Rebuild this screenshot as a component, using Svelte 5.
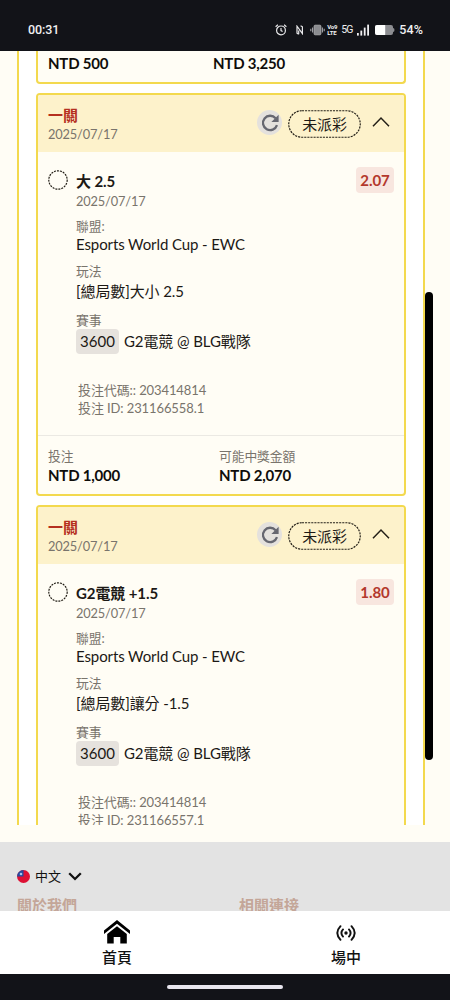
<script lang="ts">
  type Bet = {
    pick: string;
    odds: string;
    market: string;
    betId: string;
    stake: string;
    payout: string;
  };

  const bets: Bet[] = [
    {
      pick: '大 2.5',
      odds: '2.07',
      market: '[總局數]大小 2.5',
      betId: '231166558.1',
      stake: 'NTD 1,000',
      payout: 'NTD 2,070'
    },
    {
      pick: 'G2電競 +1.5',
      odds: '1.80',
      market: '[總局數]讓分 -1.5',
      betId: '231166557.1',
      stake: 'NTD 1,000',
      payout: 'NTD 1,800'
    }
  ];

  let open = $state([true, true]);
</script>

<div class="screen">
  <div class="status-bar">
    <span class="time">00:31</span>
    <div class="status-icons">
      <svg class="alarm" width="12" height="12" viewBox="0 0 12 12" fill="none" stroke="#e8e8ea" stroke-width="1.2">
        <circle cx="6" cy="6.4" r="4.4" />
        <path d="M6 3.9v2.7l1.6 1M.6 2.7L2.9.8M11.4 2.7L9.1.8" />
      </svg>
      <svg class="nfc" width="8" height="10" viewBox="0 0 8 10" fill="none" stroke="#e8e8ea" stroke-width="1.2">
        <path d="M2.7 9.2L1 8.2V1.2l5.4 7.4V1.8L4.6.8M2.7 9.2V5.4" />
      </svg>
      <svg class="vibrate" width="15" height="12" viewBox="0 0 15 12">
        <rect x="4.1" y="1.2" width="6.8" height="9.6" rx="1" fill="#8b8c90" stroke="#b5b5b8" stroke-width=".8" />
        <path d="M2.6 3.4v5.2M.8 4.7v2.6M12.4 3.4v5.2M14.2 4.7v2.6" stroke="#a5a5a9" stroke-width="1.1" />
      </svg>
      <span class="volte"><span>Vo9</span><span>LTE</span></span>
      <span class="net">5G</span>
      <svg class="signal" width="12" height="12" viewBox="0 0 12 12" fill="#f0f0f2">
        <rect x="0" y="9" width="1.8" height="2.6" />
        <rect x="3.4" y="6.6" width="1.8" height="5" />
        <rect x="6.8" y="3.6" width="1.8" height="8" />
        <rect x="10.2" y=".6" width="1.8" height="11" />
      </svg>
      <svg class="battery" width="20" height="10" viewBox="0 0 20 10">
        <path d="M2 0h14q2 0 2 2v1q1.5 0 1.5 2T18 7v1q0 2-2 2H2q-2 0-2-2V2q0-2 2-2z" fill="#8c8d91" />
        <path d="M2 0h8.2v10H2q-2 0-2-2V2q0-2 2-2z" fill="#fff" />
      </svg>
      <span class="percent">54%</span>
    </div>
  </div>

  <main class="viewport">
    <div class="panel">
      <section class="card previous">
        <div class="amounts">
          <strong>NTD 500</strong>
          <strong>NTD 3,250</strong>
        </div>
      </section>

      {#each bets as bet, i}
        <section class="card">
          <header class="card-header">
            <div class="heading">
              <h3>一關</h3>
              <span class="date">2025/07/17</span>
            </div>
            <button class="refresh" aria-label="refresh">
              <svg width="20" height="20" viewBox="0 0 20 20">
                <path d="M15.6 5.2A7.2 7.2 0 1 0 17 12.2" fill="none" stroke="#666770" stroke-width="2.3" />
                <path d="M18.6 1.8v7.2h-7.2z" fill="#666770" />
              </svg>
            </button>
            <span class="pill">
              <svg class="outline" width="73" height="28">
                <rect x=".75" y=".75" width="71.5" height="26.5" rx="13.2" fill="none" stroke="#242018" stroke-width="1.2" stroke-dasharray="2.1 1" />
              </svg>
              未派彩
            </span>
            <button class="toggle" aria-label="toggle" onclick={() => (open[i] = !open[i])}>
              <svg width="18" height="12" viewBox="0 0 18 12" fill="none" stroke="#242018" stroke-width="1.5">
                <path d="M1 10.2L9 2l8 8.2" />
              </svg>
            </button>
          </header>

          {#if open[i]}
            <div class="card-body">
              <svg class="marker" width="20" height="20">
                <circle cx="10" cy="10" r="9.2" fill="none" stroke="#242018" stroke-width="1.2" stroke-dasharray="2 1" />
              </svg>
              <div class="details">
                <div class="pick">{bet.pick}</div>
                <div class="date">2025/07/17</div>
                <div class="label league-label">聯盟:</div>
                <div class="value">Esports World Cup - EWC</div>
                <div class="label">玩法</div>
                <div class="value market">{bet.market}</div>
                <div class="label">賽事</div>
                <div class="match"><span class="match-id">3600</span>G2電競 @ BLG戰隊</div>
                <div class="codes">
                  <span>投注代碼:: 203414814</span>
                  <span>投注 ID: {bet.betId}</span>
                </div>
              </div>
              <span class="odds">{bet.odds}</span>
            </div>
          {/if}

          <footer class="card-footer">
            <div>
              <span class="label">投注</span>
              <strong>{bet.stake}</strong>
            </div>
            <div>
              <span class="label">可能中獎金額</span>
              <strong>{bet.payout}</strong>
            </div>
          </footer>
        </section>
      {/each}
    </div>
  </main>

  <div class="scrollbar"></div>

  <div class="site-footer">
    <div class="language">
      <svg width="13" height="13" viewBox="0 0 13 13">
        <circle cx="6.5" cy="6.5" r="6.5" fill="#dd1034" />
        <path d="M6.5 0v6.5H0A6.5 6.5 0 0 1 6.5 0z" fill="#254a9e" />
        <circle cx="4" cy="4" r="1.3" fill="#a9c2ea" />
      </svg>
      <span>中文</span>
      <svg class="caret" width="14" height="9" viewBox="0 0 14 9" fill="none" stroke="#111" stroke-width="2.3">
        <path d="M1.2 1.3L7 7l5.8-5.7" />
      </svg>
    </div>
    <div class="links">
      <span>關於我們</span>
      <span>相關連接</span>
    </div>
  </div>

  <nav class="tab-bar">
    <a class="tab" href="#home">
      <svg width="26" height="24" viewBox="0 0 26 24">
        <path d="M0 10.6L13 0l13 10.6V14L13 3.7 0 14z" fill="#000" />
        <path d="M3.2 14L13 6.3l9.8 7.7v9.5h-6.5v-6.4H9.7v6.4H3.2z" fill="#000" />
      </svg>
      首頁
    </a>
    <a class="tab live" href="#live">
      <svg width="20" height="16" viewBox="0 0 20 16" fill="none" stroke="#111" stroke-width="1.9" stroke-linecap="round">
        <path d="M4.5 1.2Q-1.9 8 4.5 14.8M15.5 1.2Q21.9 8 15.5 14.8M7 4.4Q3.8 8 7 11.6M13 4.4Q16.2 8 13 11.6" />
        <circle cx="10" cy="8" r="1.7" fill="#111" stroke="none" />
      </svg>
      場中
    </a>
  </nav>

  <div class="gesture-bar"><span></span></div>
</div>

<style>
  :global(body) {
    background: #fffdf5;
  }

  .screen {
    position: relative;
    width: 450px;
    height: 1000px;
    display: flex;
    flex-direction: column;
    overflow: hidden;
    background: #fffdf5;
    color: #1c1915;
    font-family: Lato, 'Noto Sans CJK TC', sans-serif;
    font-size: 15px;
    letter-spacing: -0.1px;
  }

  .screen * {
    box-sizing: border-box;
  }

  button {
    border: 0;
    padding: 0;
    background: none;
  }

  svg {
    display: block;
    flex: none;
  }

  .status-bar {
    height: 51px;
    flex: none;
    display: flex;
    align-items: center;
    justify-content: space-between;
    padding: 8px 27px 0 28px;
    background: #121318;
    color: #f0f0f2;
    font-family: Roboto, sans-serif;
    font-size: 12.5px;
    font-weight: 500;
  }

  .status-icons {
    display: flex;
    align-items: center;
  }

  .nfc {
    margin-left: 9px;
  }

  .vibrate {
    margin-left: 6px;
  }

  .volte {
    width: 12px;
    margin-left: 2px;
    font-size: 6px;
    line-height: 6px;
    font-weight: 700;
    letter-spacing: -0.2px;
    display: flex;
    flex-direction: column;
  }

  .net {
    width: 12px;
    margin-left: 2px;
    font-size: 10.5px;
    font-weight: 400;
    letter-spacing: -0.9px;
  }

  .signal {
    margin-left: 4px;
  }

  .battery {
    margin-left: 6px;
  }

  .percent {
    margin-left: 4px;
    font-size: 12.5px;
    letter-spacing: 0.1px;
  }

  .viewport {
    height: 774px;
    flex: none;
    overflow: hidden;
  }

  .panel {
    margin: 0 25px 0 17px;
    padding: 0 17px 0 17px;
    border: solid #f3d94e;
    border-width: 0 2px;
    background: #fff;
  }

  .card {
    margin-bottom: 9px;
    border: 2px solid #f3d94e;
    border-radius: 4px;
    background: #fffdf5;
    overflow: hidden;
  }

  .previous {
    height: 33px;
    border-top: 0;
    border-radius: 0 0 4px 4px;
  }

  .amounts {
    display: grid;
    grid-template-columns: 165px 1fr;
    padding: 1px 10px;
    line-height: 22px;
  }

  strong {
    font-weight: 700;
    letter-spacing: -0.2px;
    color: #0f0d0a;
  }

  .card-header {
    height: 57px;
    display: flex;
    align-items: center;
    padding: 0 14px 0 10px;
    background: #fdf2cb;
  }

  .heading {
    flex: 1;
    padding-top: 4px;
  }

  h3 {
    margin: 0;
    font-size: 15px;
    line-height: 17px;
    font-weight: 700;
    color: #b5301f;
  }

  .date {
    display: block;
    font-size: 12.8px;
    line-height: 20px;
    letter-spacing: -0.15px;
    color: #79746c;
  }

  .refresh {
    width: 25px;
    height: 25px;
    margin: -2px 6px 0 0;
    display: grid;
    place-items: center;
    border-radius: 50%;
    background: #e4e1dd;
  }

  .pill {
    position: relative;
    width: 73px;
    height: 28px;
    line-height: 28px;
    text-align: center;
  }

  .outline {
    position: absolute;
    inset: 0;
  }

  .toggle {
    margin: -3px 0 0 11px;
  }

  .card-body {
    height: 283px;
    display: flex;
    align-items: flex-start;
    padding: 15px 10px 0;
  }

  .marker {
    margin: 3px 8px 0 0;
  }

  .details {
    flex: 1;
    padding-top: 3px;
  }

  .pick {
    line-height: 22px;
    font-weight: 700;
  }

  .details .date {
    height: 16px;
    line-height: 18px;
  }

  .label {
    font-size: 12.8px;
    line-height: 16px;
    color: #79746c;
  }

  .details .label {
    margin-top: 9px;
  }

  .details .league-label {
    margin-top: 10px;
  }

  .value {
    line-height: 20px;
  }

  .market {
    line-height: 24px;
  }

  .match {
    display: flex;
    align-items: center;
    gap: 5px;
    height: 25px;
    margin-top: 1px;
    line-height: 25px;
  }

  .match-id {
    width: 43px;
    height: 25px;
    border-radius: 4px;
    background: #e6e2dd;
    text-align: center;
    letter-spacing: 0;
  }

  .codes {
    display: flex;
    flex-direction: column;
    margin: 27px 0 0 2px;
    font-size: 13px;
    line-height: 18px;
    color: #79746c;
  }

  .odds {
    width: 38px;
    height: 26px;
    line-height: 27px;
    border-radius: 4px;
    background: #f8e6df;
    color: #b3382c;
    font-weight: 700;
    text-align: center;
  }

  .card-footer {
    height: 59px;
    display: grid;
    grid-template-columns: 171px 1fr;
    padding: 12px 10px 0;
    border-top: 1px solid #ebe9e3;
  }

  .card-footer div {
    display: flex;
    flex-direction: column;
  }

  .card-footer strong {
    line-height: 23px;
  }

  .scrollbar {
    position: absolute;
    left: 425px;
    top: 292px;
    width: 8px;
    height: 468px;
    border-radius: 4px;
    background: #000;
  }

  .site-footer {
    height: 69px;
    flex: none;
    margin-top: 17px;
    padding: 24px 17px 0;
    overflow: hidden;
    background: #e3e3e3;
  }

  .language {
    display: flex;
    align-items: center;
    height: 20px;
    font-size: 13px;
    line-height: 18px;
    color: #111;
  }

  .language span {
    margin: -1px 7px 0 5px;
  }

  .links {
    display: grid;
    grid-template-columns: 222px 1fr;
    margin-top: 9px;
    line-height: 20px;
    letter-spacing: 0;
    color: #c4a698;
    font-weight: 700;
  }

  .tab-bar {
    height: 63px;
    flex: none;
    display: flex;
    background: #fff;
  }

  .tab {
    width: 234px;
    flex: none;
    display: flex;
    flex-direction: column;
    align-items: center;
    padding-top: 9px;
    line-height: 26px;
    font-weight: 500;
    color: #111;
    text-decoration: none;
  }

  .live {
    width: 224px;
  }

  .live svg {
    margin: 5px 0 3px;
  }

  .gesture-bar {
    flex: 1;
    display: grid;
    place-items: center;
    background: #121318;
  }

  .gesture-bar span {
    width: 116px;
    height: 4px;
    border-radius: 2px;
    background: #e8e6ef;
  }
</style>
